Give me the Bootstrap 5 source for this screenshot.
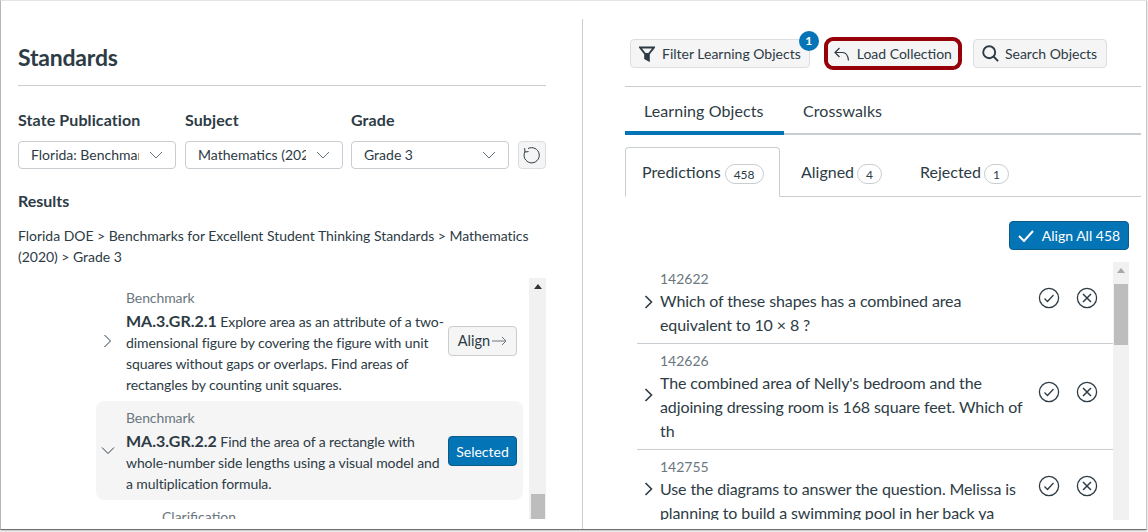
<!DOCTYPE html>
<html lang="en">
<head>
  <meta charset="UTF-8" />
  <title>Standards</title>
  <link href="https://cdn.jsdelivr.net/npm/bootstrap@5.3.3/dist/css/bootstrap.min.css" rel="stylesheet">
  <style>
    html, body { height: 532px; overflow: hidden; background: #fff; }
    body { font-family: Lato, "Liberation Sans", sans-serif; font-size: 14px; line-height: 21px; color: #2d3b45; }
    svg { display: block; flex: none; }
    .shot-frame { width: 1147px; height: 530px; border-top: 1px solid #e4e4e4; border-left: 1px solid #b5b5b5; border-right: 1px solid #c8c8c8; border-bottom: 1px solid #6f6f6f; box-shadow: 0 1px 2px #bbb; }

    /* left side */
    .left-pane { width: 581px; height: 528px; padding: 0 36px 0 17px; }
    .pane-title { font-size: 23px; letter-spacing: -.2px; line-height: 30px; font-weight: 700; margin: 0; padding-top: 41px; height: 85px; border-bottom: 1px solid #c7cdd1; }
    .field-label { font-size: 16px; letter-spacing: .1px; font-weight: 700; line-height: 20px; margin: 24px 0 11px; display: block; }
    .pick-col { width: 158px; margin-right: 9px; }
    .pick-last { margin-right: 8px; }
    .pick-shift { margin-right: 8px; }
    .pick-select { height: 28px; padding: 0 36px 2px 12px; font-size: 14px; color: #2d3b45; border-color: #c7cdd1; border-radius: 4px; background-size: 14px 8px; background-position: right 12px center;
      background-image: url("data:image/svg+xml,%3csvg xmlns='http://www.w3.org/2000/svg' viewBox='0 0 14 8'%3e%3cpath fill='none' stroke='%2356646e' stroke-width='.9' d='M1 1l6 6 6-6'/%3e%3c/svg%3e"); }
    .reset-btn { width: 28px; height: 28px; padding: 0; background: #f5f5f5; border: 1px solid #dadee0; border-radius: 4px; margin-left: 1px; }
    .results-label { font-size: 16px; font-weight: 700; margin: 21px 0 14px; line-height: 21px; }
    .crumb-text { margin: 0 0 11px; letter-spacing: -.03px; }
    .tree-box { height: 241px; overflow: hidden; }
    .tree-list { width: 511px; padding-top: 9px; overflow: hidden; }
    .tree-row { margin-left: 78px; width: 427px; padding-right: 6px; }
    .tree-first { height: 109px; }
    .tree-open { background: #f5f5f5; border-radius: 8px; margin-top: 5px; padding-top: 6px; padding-bottom: 6px; }
    .tree-chev { width: 30px; flex: none; }
    .chev-right { padding: 47px 0 0 7px; }
    .chev-down { padding: 39px 0 0 5px; }
    .tree-kind { color: #6b7780; line-height: 21px; margin-bottom: 1px; }
    .tree-code { font-size: 16px; font-weight: 700; line-height: 23px; letter-spacing: 0; }
    .tree-text { line-height: 21px; width: 322px; flex: none; letter-spacing: -.1px; }
    .align-btn { width: 69px; height: 30px; padding: 0; font-size: 14.5px; color: #2d3b45; background: #f5f5f5; border: 1px solid #c7cdd1; border-radius: 4px; margin-top: 39px; gap: 2px; }
    .selected-btn { width: 69px; height: 30px; padding: 0; font-size: 14px; color: #fff; background: #0374b5; border: 1px solid #0a5a8a; border-radius: 4px; margin-top: 29px; }
    .clar-text { color: #6b7780; padding-left: 144px; padding-top: 6px; }
    .fake-scroll { width: 17px; background: #f1f1f1; flex: none; }
    .arrow-up { width: 0; height: 0; border-left: 4px solid transparent; border-right: 4px solid transparent; border-bottom: 5px solid #333; margin: 6px auto 0; }
    .thumb-left { width: 14px; height: 26px; background: #bdbdbd; margin: 205px auto 0; }

    /* right side */
    .right-pane { width: 564px; margin-top: 18px; height: 510px; border-left: 1px solid #c7cdd1; padding-left: 42px; padding-right: 5px; }
    .tool-bar { height: 68px; padding: 20px 0 0 5px; border-bottom: 1px solid #c7cdd1; gap: 14px; }
    .tool-btn { height: 29px; padding: 0 8px; font-size: 14px; line-height: 27px; color: #2d3b45; background: #f5f5f5; border: 1px solid #dadee0; border-radius: 4px; white-space: nowrap; display: inline-flex; align-items: center; gap: 7px; }
    .tool-btn:hover { background: #f5f5f5; }
    .ring-btn { height: 25px; margin: 2px 1px 0 4px; padding: 0 5px 0 5px; gap: 7px; border-color: #f5f5f5; box-shadow: 0 0 0 4px #960008; border-radius: 5px; }
    .search-btn { gap: 6px; padding-right: 9px; }
    .count-dot { width: 20px; height: 20px; top: -9px; right: -10px; background: #0374b5; color: #fff; font-size: 12px; font-weight: 700; line-height: 20px; text-align: center; border-radius: 50%; position: absolute; }
    .main-tabs { border-bottom: 2px solid #c7cdd1; height: 48px; }
    .main-tabs .nav-link { font-size: 16px; letter-spacing: .08px; line-height: 20px; color: #2d3b45; border: 0; padding: 14px 19px 11px; height: 48px; background: none; }
    .main-tabs .nav-link.active { border-bottom: 4px solid #0374b5; width: 159px; }
    .sub-tabs { margin-top: 12px; border-bottom: 1px solid #c7cdd1; height: 50px; }
    .sub-tabs .nav-link { font-size: 16px; color: #2d3b45; border: 1px solid transparent; height: 50px; padding: 14px 16px 0 20px; margin: 0; border-radius: 4px 4px 0 0; display: flex; align-items: flex-start; gap: 3px; line-height: 20px; }
    .sub-tabs .nav-link.active { padding-left: 16px; padding-right: 16px; gap: 4px; border-color: #c7cdd1 #c7cdd1 #fff; width: 155px; color: #2d3b45; }
    .count-pill { border: 1px solid #c7cdd1; border-radius: 10px; height: 20px; line-height: 19px; font-size: 12px; padding: 0 8px; margin-top: 2px; background: #fff; }
    .align-all-row { padding: 24px 12px 0 0; height: 53px; }
    .align-all { height: 29px; width: 120px; padding: 0; background: #0374b5; border: 1px solid #0a5a8a; color: #fff; font-size: 14px; border-radius: 4px; display: flex; align-items: center; justify-content: center; gap: 8px; }
    .align-all:hover { background: #0374b5; color: #fff; }
    .obj-wrap { margin-top: 12px; height: 258px; padding-left: 12px; padding-right: 12px; }
    .obj-list { width: 476px; overflow: hidden; }
    .obj-row { border-bottom: 1px solid #c7cdd1; padding: 6px 0; }
    .obj-last { border-bottom: 0; }
    .obj-chev { width: 23px; flex: none; padding-left: 7px; margin-top: 27px; }
    .obj-chev-mid { margin-top: 38px; }
    .obj-chev-end { margin-top: 26px; }
    .obj-body { width: 366px; flex: none; }
    .obj-id { color: #6b7780; line-height: 21px; }
    .obj-text { font-size: 16px; line-height: 24px; letter-spacing: -.11px; }
    .obj-acts { gap: 16px; padding-left: 12px; flex: none; margin-top: 19px; }
    .obj-acts-mid { margin-top: 31px; }
    .obj-acts-end { margin-top: 19px; }
    .scroll-right { width: 16px; }
    .thumb-right { width: 14px; height: 61px; background: #bdbdbd; margin: 11px auto 0; }
    .arrow-soft { border-bottom-color: #a8a8a8; }
  </style>
</head>
<body class="m-0">
  <div class="shot-frame d-flex">

    <div class="left-pane">
      <h1 class="pane-title">Standards</h1>
      <div class="d-flex">
        <div class="pick-col"><label class="field-label">State Publication</label>
          <select class="form-select pick-select"><option>Florida: Benchmarks for Excellent Student Thinking</option></select></div>
        <div class="pick-col pick-shift"><label class="field-label">Subject</label>
          <select class="form-select pick-select"><option>Mathematics (2020)</option></select></div>
        <div class="pick-col pick-last"><label class="field-label">Grade</label>
          <select class="form-select pick-select"><option>Grade 3</option></select></div>
        <div class="d-flex align-items-end">
          <button class="btn reset-btn d-flex align-items-center justify-content-center" type="button" aria-label="Reset">
            <svg width="18" height="18" viewBox="0 0 18 18" fill="none" stroke="#2d3b45"><path d="M5 2.6A7.6 7.6 0 1 1 2 5.6"/><path d="M1.6 2.2L2 6l3.6-.4"/></svg>
          </button>
        </div>
      </div>
      <div class="results-label">Results</div>
      <p class="crumb-text">Florida DOE &gt; Benchmarks for Excellent Student Thinking Standards &gt; Mathematics (2020) &gt; Grade 3</p>

      <div class="tree-box d-flex">
        <div class="tree-list">
          <div class="tree-row tree-first d-flex align-items-start">
            <div class="tree-chev chev-right"><svg width="9" height="14" viewBox="0 0 9 14" fill="none" stroke="#2d3b45"><path d="M1.5 1l6 6-6 6"/></svg></div>
            <div class="tree-text">
              <div class="tree-kind">Benchmark</div>
              <div><span class="tree-code">MA.3.GR.2.1</span> Explore area as an attribute of a two-dimensional figure by covering the figure with unit squares without gaps or overlaps. Find areas of rectangles by counting unit squares.</div>
            </div>
            <button class="btn align-btn d-flex align-items-center justify-content-center" type="button">Align<svg width="15" height="10" viewBox="0 0 15 10" fill="none" stroke="#6b7780"><path d="M0 5h14M10 1l4 4-4 4"/></svg></button>
          </div>
          <div class="tree-row tree-open d-flex align-items-start">
            <div class="tree-chev chev-down"><svg width="14" height="9" viewBox="0 0 14 9" fill="none" stroke="#2d3b45"><path d="M1 1.5l6 6 6-6"/></svg></div>
            <div class="tree-text">
              <div class="tree-kind">Benchmark</div>
              <div><span class="tree-code">MA.3.GR.2.2</span> Find the area of a rectangle with whole-number side lengths using a visual model and a multiplication formula.</div>
            </div>
            <button class="btn selected-btn" type="button">Selected</button>
          </div>
          <div class="clar-text">Clarification</div>
        </div>
        <div class="fake-scroll"><div class="arrow-up"></div><div class="thumb-left"></div></div>
      </div>
    </div>

    <div class="right-pane">
      <div class="tool-bar d-flex align-items-start">
        <button class="btn tool-btn position-relative" type="button">
          <svg width="16" height="16" viewBox="0 0 16 16" fill="none" stroke="#2d3b45" stroke-width="2"><path d="M1 1.5h14L9.8 8v6.4l-3.6-2V8z"/><path fill="#2d3b45" stroke="none" d="M6.5 7h3v7l-3-1.6z"/></svg>
          Filter Learning Objects
          <span class="count-dot">1</span>
        </button>
        <button class="btn tool-btn ring-btn" type="button">
          <svg width="16" height="16" viewBox="0 0 16 16" fill="none" stroke="#2d3b45" stroke-width="1.2"><path d="M5.5 2L1 6.5 5.5 11M1 6.5h7.5c4 0 5.5 3 6 8"/></svg>
          Load Collection
        </button>
        <button class="btn tool-btn search-btn" type="button">
          <svg width="17" height="17" viewBox="0 0 17 17" fill="none" stroke="#2d3b45" stroke-width="1.9"><circle cx="7.2" cy="7.2" r="6"/><path d="M11.5 11.5l4.6 4.6"/></svg>
          Search Objects
        </button>
      </div>

      <ul class="nav main-tabs">
        <li class="nav-item"><a class="nav-link active" href="#">Learning Objects</a></li>
        <li class="nav-item"><a class="nav-link" href="#">Crosswalks</a></li>
      </ul>

      <ul class="nav nav-tabs sub-tabs">
        <li class="nav-item"><a class="nav-link active" href="#">Predictions <span class="count-pill">458</span></a></li>
        <li class="nav-item"><a class="nav-link" href="#">Aligned <span class="count-pill">4</span></a></li>
        <li class="nav-item"><a class="nav-link" href="#">Rejected <span class="count-pill">1</span></a></li>
      </ul>

      <div class="align-all-row d-flex justify-content-end">
        <button class="btn align-all" type="button">
          <svg width="16" height="12" viewBox="0 0 16 12" fill="none" stroke="#fff" stroke-width="2"><path d="M1 6l5 5L15 1"/></svg>
          Align All 458
        </button>
      </div>

      <div class="obj-wrap d-flex">
        <div class="obj-list">
          <div class="obj-row d-flex align-items-start">
            <div class="obj-chev"><svg width="9" height="14" viewBox="0 0 9 14" fill="none" stroke="#2d3b45" stroke-width="1.6"><path d="M1.5 1l6 6-6 6"/></svg></div>
            <div class="obj-body"><div class="obj-id">142622</div><div class="obj-text">Which of these shapes has a combined area equivalent to 10 × 8 ?</div></div>
            <div class="obj-acts d-flex">
              <svg width="22" height="22" viewBox="0 0 22 22" fill="none" stroke="#2d3b45" stroke-width="1.3"><circle cx="11" cy="11" r="9.6"/><path d="M6.5 11.5l3 3 6-6.5"/></svg>
              <svg width="22" height="22" viewBox="0 0 22 22" fill="none" stroke="#2d3b45" stroke-width="1.3"><circle cx="11" cy="11" r="9.6"/><path stroke-width="1.5" d="M7 7l8 8M15 7l-8 8"/></svg>
            </div>
          </div>
          <div class="obj-row d-flex align-items-start">
            <div class="obj-chev obj-chev-mid"><svg width="9" height="14" viewBox="0 0 9 14" fill="none" stroke="#2d3b45" stroke-width="1.6"><path d="M1.5 1l6 6-6 6"/></svg></div>
            <div class="obj-body"><div class="obj-id">142626</div><div class="obj-text">The combined area of Nelly's bedroom and the adjoining dressing room is 168 square feet. Which of th</div></div>
            <div class="obj-acts obj-acts-mid d-flex">
              <svg width="22" height="22" viewBox="0 0 22 22" fill="none" stroke="#2d3b45" stroke-width="1.3"><circle cx="11" cy="11" r="9.6"/><path d="M6.5 11.5l3 3 6-6.5"/></svg>
              <svg width="22" height="22" viewBox="0 0 22 22" fill="none" stroke="#2d3b45" stroke-width="1.3"><circle cx="11" cy="11" r="9.6"/><path stroke-width="1.5" d="M7 7l8 8M15 7l-8 8"/></svg>
            </div>
          </div>
          <div class="obj-row obj-last d-flex align-items-start">
            <div class="obj-chev obj-chev-end"><svg width="9" height="14" viewBox="0 0 9 14" fill="none" stroke="#2d3b45" stroke-width="1.6"><path d="M1.5 1l6 6-6 6"/></svg></div>
            <div class="obj-body"><div class="obj-id">142755</div><div class="obj-text">Use the diagrams to answer the question. Melissa is planning to build a swimming pool in her back ya</div></div>
            <div class="obj-acts obj-acts-end d-flex">
              <svg width="22" height="22" viewBox="0 0 22 22" fill="none" stroke="#2d3b45" stroke-width="1.3"><circle cx="11" cy="11" r="9.6"/><path d="M6.5 11.5l3 3 6-6.5"/></svg>
              <svg width="22" height="22" viewBox="0 0 22 22" fill="none" stroke="#2d3b45" stroke-width="1.3"><circle cx="11" cy="11" r="9.6"/><path stroke-width="1.5" d="M7 7l8 8M15 7l-8 8"/></svg>
            </div>
          </div>
        </div>
        <div class="fake-scroll scroll-right"><div class="arrow-up arrow-soft"></div><div class="thumb-right"></div></div>
      </div>
    </div>

  </div>
  <script src="https://cdn.jsdelivr.net/npm/bootstrap@5.3.3/dist/js/bootstrap.bundle.min.js"></script>
</body>
</html>
